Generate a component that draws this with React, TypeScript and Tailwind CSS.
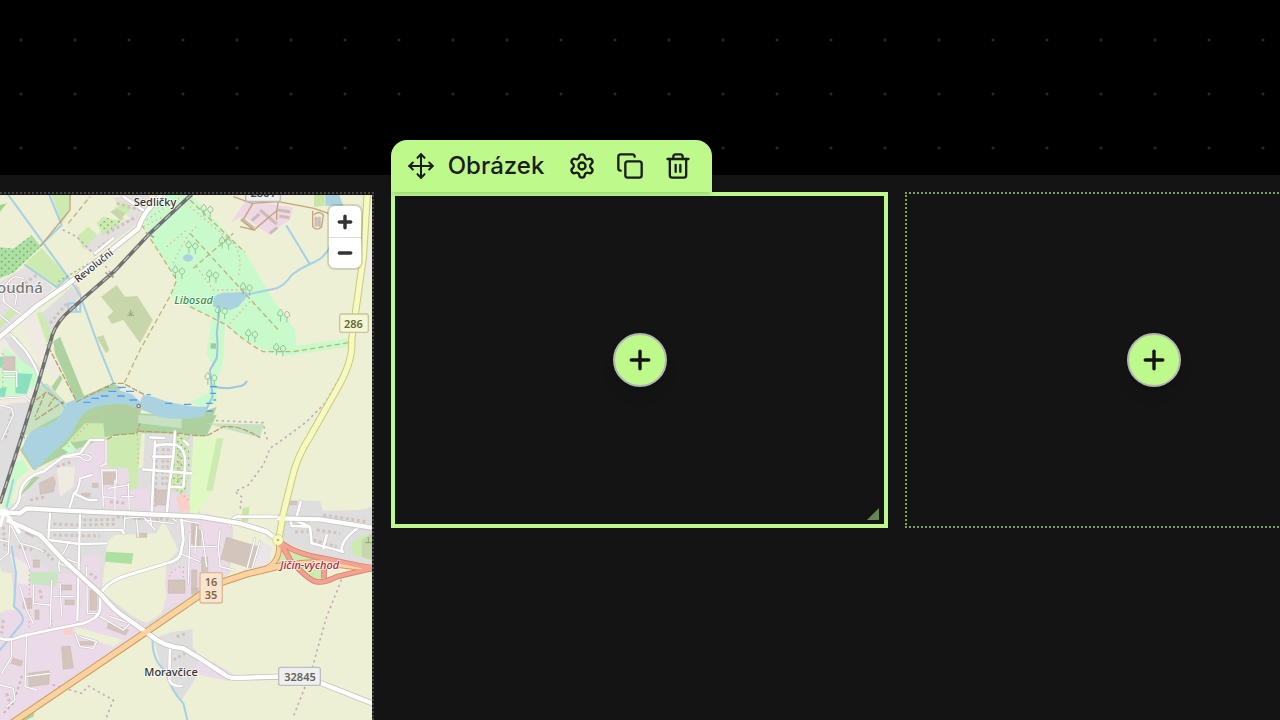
import type { ReactNode } from "react";
import { Copy, Move, Plus, Settings, Trash2 } from "lucide-react";

type Line = { d: string; w?: number };

const streets: Line[] = [
  // north-west village
  { d: "M0 945 L40 978 M30 1000 L75 1050 M10 885 L12 905 Q40 930 75 950 M10 905 Q5 850 45 830 L70 835 M20 865 L50 885 L45 915" },
  { d: "M285 760 L340 715 M370 590 L435 635", w: 9 },
  { d: "M38 1010 L75 1050 Q110 1100 120 1140", w: 8 },
  // west blocks
  { d: "M0 1215 L35 1225 L40 1245 L5 1320 M0 1195 L75 1190 L90 1205 M10 1115 L50 1115 L50 1160 M12 1130 L45 1130" },
  // large centre streets
  { d: "M25 1535 Q60 1520 60 1480 Q70 1430 130 1415 L190 1370 L240 1360 L270 1320 L310 1320", w: 9 },
  { d: "M195 1372 L240 1370 Q260 1390 275 1375 Q265 1360 245 1365" },
  { d: "M240 1435 L275 1425 M240 1435 Q235 1475 222 1480 L205 1535 M222 1480 L265 1500 L290 1500", w: 8 },
  { d: "M318 1320 L318 1395 M300 1400 L318 1390" },
  { d: "M525 1295 L520 1370 L510 1440 L500 1545 M465 1325 L455 1540 M465 1340 Q480 1330 530 1335 Q560 1350 555 1400 L550 1460 M460 1370 L518 1370 M430 1408 L575 1420 M510 1460 L548 1462 M450 1312 L492 1314 M552 1322 L565 1335", w: 9 },
  { d: "M305 1410 L310 1520 M345 1440 L345 1535 M385 1450 L388 1530 M325 1465 L385 1455 M310 1490 L350 1495 M365 1490 L400 1490 M308 1410 L350 1410 L350 1450" },
  { d: "M150 1540 L145 1615 M240 1540 L232 1860 M145 1590 L365 1590 L372 1600 M145 1620 L240 1632 L320 1630", w: 8 },
  { d: "M375 1545 L372 1590 M375 1555 L430 1550 L465 1590 M410 1560 L415 1610 M435 1560 L470 1565 L520 1570 M450 1545 L455 1580 M500 1545 L530 1565" },
  { d: "M30 1560 L25 1660 L0 1680 M0 1620 L25 1625 M30 1570 L60 1630 Q110 1640 130 1655 M65 1635 L90 1705" },
  { d: "M205 1625 Q200 1650 185 1665 Q170 1690 180 1715 M180 1690 L220 1710 M195 1675 L235 1690" },
  { d: "M545 1560 L550 1620 L542 1660 Q540 1680 500 1690 L385 1725 Q330 1740 305 1775", w: 10 },
  { d: "M302 1775 L300 1830 Q295 1855 250 1870 L150 1890 L60 1910 Q30 1925 0 1915", w: 9 },
  { d: "M100 1755 L100 1810 L150 1815 M60 1760 L80 1830 L100 1870 M180 1750 L185 1850 M160 1790 L225 1790 M155 1740 L150 1880 M260 1700 L262 1840 L290 1840" },
  { d: "M35 1915 L35 1970 L5 2020 M80 1900 L75 2060 L110 2070 M75 2030 L150 2020 M225 1900 L240 1940 L280 1945 L290 1925 L240 1910 M0 2055 L40 2065 L45 2100 L20 2120" },
  { d: "M300 1850 L370 1890 L390 1870 L330 1850 M540 1660 L600 1685 M570 1600 L565 1750 M540 1560 L600 1570" },
  { d: "M510 1935 L508 2040 Q515 2060 545 2058", w: 9 },
  // east residential
  { d: "M870 1555 L930 1580 L935 1630 L1030 1655 M980 1605 L970 1645 M1080 1580 Q1020 1620 1025 1655 M902 1505 L890 1550 M870 1550 L875 1578 L930 1580", w: 9 },
  { d: "M690 1575 Q700 1545 720 1550 L840 1550", w: 9 },
  { d: "M655 1640 L660 1700 L700 1710 M780 1625 L755 1710 M765 1615 L740 1710 M590 1580 L585 1660 M605 1590 L620 1700 M660 1590 L655 1640 M570 1640 L650 1640" },
];

const stream = "M25 585 L205 832 L240 885 L300 1050 L345 1160 M148 585 L185 675 L120 738 M75 795 L170 862 L205 830 M205 910 h36 v25 h-36z M214 920 v15 M228 920 v15";
const railway = "M575 583 L450 700 L345 812 L250 895 L195 945 Q160 980 150 1030 L110 1165 L65 1310 L0 1510";
const primary = "M20 2180 L400 1922 L600 1785 L670 1745 L740 1722 L830 1700 Q920 1685 990 1690 L1116 1705";
const mainStreet = "M-10 1535 L60 1540 L80 1525 L200 1532 L600 1550 L720 1570 L800 1595 Q820 1612 832 1618 M832 1555 L960 1558 L1116 1583";
const roadEast = "M1102 580 L1090 770 L1055 1020 Q1060 1080 1015 1160 L930 1310 Q890 1370 875 1440 L850 1540 L836 1620";
const roadNorth = "M-10 1018 L110 918 L200 855 L340 745 L415 685 Q425 655 440 635 L482 585";
const roadSouth = "M20 1560 L120 1605 L190 1680 L305 1785 Q340 1830 380 1855 L450 1905 Q490 1940 550 1945 L600 1975 L680 2028 Q690 2034 710 2034 L830 2030 L940 2040 L1116 2110";
const motorwayLink = "M835 1622 Q880 1660 970 1675 L1116 1705 M840 1635 Q860 1655 870 1680 Q930 1745 950 1745 Q970 1750 1010 1730 L1060 1718 L1116 1705 M972 1735 L972 1705";

const buildings =
  "M118 1450 l40 -20 l8 15 l-5 30 l-40 8z M310 1418 h35 v35 h-35z M278 1450 h16 v12 h-16z M10 1070 h35 v40 h-35z M465 1470 h40 v45 h-40z" +
  "M505 1740 h50 v40 h-50z M270 1770 h20 v60 h-20z M325 1870 l60 20 l-8 15 l-55 -20z M185 1940 l25 -2 l10 65 l-30 5z M85 2020 l62 -8 v40 l-60 8z M40 1975 l28 8 l-5 15 l-30 -8z M70 1795 h25 v30 h-25z M180 1755 h35 v15 h-35z M195 1800 h28 v14 h-28z" +
  "M680 1612 l95 28 l-20 65 l-92 -28z M580 1590 h22 v50 h-22z M605 1672 h18 v60 h-18z M575 1710 h15 v60 h-15z M575 1570 h20 v60 h-20z M370 1545 h20 v10 h-20z M410 1600 h30 v12 h-30z M160 1525 h20 v8 h-20z M245 1480 h25 v10 h-25z" +
  "M105 1830 h12 v28 h-12z M235 1925 h45 v10 h-45z M870 1504 h20 v10 h-20z M80 1590 l25 12 l-5 10 l-25 -12z M100 1680 h18 v22 h-18z M575 1765 h20 v18 h-20z";

const smallHouses = "M320 700 L410 650 M295 745 L330 720 M350 610 L420 630 M60 860 L110 825 M75 880 L110 860 M150 970 L205 905 M470 1345 L465 1520 M490 1345 L488 1455 M505 1345 L500 1455 M395 1555 L520 1558 M250 1575 L350 1572 M160 1572 L235 1575 M160 1605 L300 1608 M55 1640 L100 1650 M530 1910 L560 1900 M520 1980 L555 1960 M540 2030 L565 2010 M885 1595 L925 1595 M950 1590 L1020 1600 M940 1620 L1010 1640 M970 1545 L1100 1565 M170 1400 L215 1385 M90 1500 L140 1490 M350 1550 L480 1560 M35 1240 L15 1320 M250 1560 L350 1558 M330 1505 L380 1510 M540 1350 L535 1450 M130 1650 L160 1680 M10 1580 L15 1650 M120 1770 L125 1800 M10 1860 L5 1900 M20 2080 L30 2110 M270 1720 L290 1735";

function Area({ d, fill }: { d: string; fill: string }) {
  return <path d={d} fill={fill} />;
}

function Trees({ x, y }: { x: number; y: number }) {
  return (
    <path
      transform={`translate(${x} ${y}) scale(1.2)`}
      d="M-7 12 V-2 M-7 -2 q-9 0 -7 -8 l7 -9 l6 9 q2 8 -6 8 M9 14 V2 M9 2 q-8 -2 -6 -10 q6 -10 12 0 q3 8 -6 10"
      fill="none"
      stroke="#83b98c"
      strokeWidth="2"
    />
  );
}

function Label({ x, y, size = 33, fill = "#333", children, ...rest }: {
  x: number; y: number; size?: number; fill?: string; children: ReactNode; transform?: string; fontStyle?: string; fontWeight?: number; textAnchor?: "start" | "middle";
}) {
  return (
    <text x={x} y={y} fontSize={size} fontWeight={500} fill={fill} stroke="#fff" strokeOpacity=".7" strokeWidth="6" strokeLinejoin="round" paintOrder="stroke" textAnchor="middle" {...rest}>
      {children}
    </text>
  );
}

function Shield({ x, y, w, h, fill, stroke }: { x: number; y: number; w: number; h: number; fill: string; stroke: string }) {
  return <rect x={x} y={y} width={w} height={h} rx="6" fill={fill} stroke={stroke} strokeWidth="4" />;
}

function TownMap() {
  return (
    <svg viewBox="0 585 1116 1575" preserveAspectRatio="xMinYMin slice" className="block h-full w-full font-['Noto_Sans',sans-serif]" role="img" aria-label="Mapa">
      <defs>
        <pattern id="orchard" width="22" height="20" patternUnits="userSpaceOnUse">
          <circle cx="5" cy="5" r="2.4" fill="#579b55" />
          <circle cx="16" cy="15" r="2.4" fill="#579b55" />
        </pattern>
      </defs>
      <rect y="585" width="1116" height="1575" fill="#edf0d5" />

      {/* built-up areas */}
      <Area fill="#e2dfdc" d="M340 595 L375 585 H450 V630 L420 665 L290 762 L250 745 L290 705 L325 680 L390 655z" />
      <Area fill="#e6dfe2" d="M0 845 L85 795 L120 830 L160 865 L70 945 L0 1010z" />
      <Area fill="#dedede" d="M125 940 L215 860 L240 890 L190 940 Q160 970 145 1020z" />
      <Area fill="#f0ebe2" d="M60 970 L120 930 L145 1040 L190 1150 L180 1160 L110 1070z" />
      <Area fill="#f0ebe2" d="M0 1020 L30 1000 L130 1130 L60 1330 L0 1500z" />
      <Area fill="#dedede" d="M10 1010 L50 1010 L125 1110 L110 1140 L30 1040z M40 1210 L90 1205 L55 1340 L0 1480 V1220z" />
      <Area fill="#e1dedf" d="M60 1500 L110 1430 L200 1370 L260 1310 L320 1320 V1400 L440 1405 V1290 H600 V1550 L700 1580 L690 1720 L590 1790 L400 1925 L60 2160 H0 V1840 L40 1830 L0 1700 V1530z" />
      <Area fill="#ebdae8" d="M230 1390 L300 1310 L320 1320 V1405 L385 1405 L395 1470 L450 1465 L530 1480 V1530 L310 1520 L300 1450 L230 1440z" />
      <Area fill="#ebdae8" d="M60 1640 L180 1720 L240 1720 L300 1780 L430 1890 L40 2160 H0 V1880z M500 1710 L570 1700 L560 1560 L620 1540 L690 1575 L680 1720 L590 1780 L490 1830z M240 1580 L300 1660 V1770 L250 1720z" />
      <Area fill="#dedede" d="M90 1600 L145 1630 L240 1720 L170 1720 L95 1680z M140 1530 L310 1530 L320 1660 L240 1670 L145 1610z M350 1545 L440 1550 L430 1600 L370 1610z" />
      <Area fill="#dedede" d="M180 1485 L290 1475 L310 1530 L90 1525z M435 1300 L525 1295 L510 1465 L425 1465z" />
      <Area fill="#f0ebe2" d="M170 1400 L225 1400 L220 1460 L180 1490z M30 1660 L90 1700 L85 1755 L50 1750z" />
      <Area fill="#dedede" d="M460 1915 L520 1895 L578 1888 V1940 L600 1970 L590 2030 L545 2100 L510 2060 L480 1990z" />
      <Area fill="#ebdae8" d="M580 1990 L640 1985 L720 2035 L680 2042 L600 2025z" />
      <Area fill="#dedede" d="M850 1500 L960 1503 L970 1532 L1080 1530 L1116 1520 V1700 L960 1670 L840 1620z" />
      <Area fill="#ebe5e9" d="M780 1620 L815 1640 L808 1700 L755 1710z" />
      <Area fill="#eed8e6" d="M692 668 L738 600 L880 622 L870 660 L845 675 L810 706 L730 648z" />

      {/* fields, meadows and woods */}
      <Area fill="#cdebb0" d="M85 780 L125 745 L205 830 L170 860 L75 795z M155 585 H213 L205 640 L185 672z M230 710 L265 680 L292 705 L250 745z M290 670 L310 650 L345 660 L375 655 L310 705z M345 625 L375 605 L395 625 L365 655z" />
      <Area fill="#c8d7ab" d="M330 635 L350 625 L375 640 L362 660z M303 890 L350 855 L375 890 L412 888 L458 960 L420 1030 L370 960 L335 972 L322 950 L340 935z M290 1012 L310 1005 L328 1050 L318 1060z" />
      <Area fill="#aedfa3" d="M0 742 L40 746 L95 706 L122 740 L40 818 L0 835z" />
      <path d="M0 742 L40 746 L95 706 L122 740 L40 818 L0 835z" fill="url(#orchard)" />
      <path d="M290 670 L310 650 L345 660 L375 655 L310 705z" fill="url(#orchard)" />
      <Area fill="#9bd58f" d="M0 615 L20 610 L0 635z" />
      <Area fill="#aed1a0" d="M160 1025 L180 1010 L255 1195 L230 1205 L165 1060z M155 1160 L180 1125 L188 1135 L165 1175z" />
      <Area fill="#cdebb0" d="M110 940 L125 935 L165 1020 L140 1030z M0 960 L30 925 L50 940 L0 985z" />
      <Area fill="#c8facc" d="M440 640 L500 585 H575 L735 757 L820 900 L885 990 L888 1037 L1045 1015 V1040 L870 1066 L810 1060 L720 1010 L675 970 L570 920 L512 885 L530 840 L430 680z" />
      <Area fill="#c8facc" d="M635 960 L675 970 L670 1060 L665 1110 L650 1130 L650 1210 L600 1220 L570 1205 L625 1180 L640 1100 L620 1060z" />
      <Area fill="#c8e1c0" d="M110 1160 L140 1150 L200 1210 L190 1240 L110 1290 L70 1310 L90 1200z" />
      <Area fill="#aed1a0" d="M60 1350 L110 1285 L190 1240 L200 1210 L340 1150 L430 1210 L420 1240 L570 1250 L650 1220 L620 1300 L420 1300 L320 1310 L200 1360 L100 1410z" />
      <Area fill="#add19e" d="M315 1220 L415 1210 L412 1295 L315 1310z M545 1255 L650 1245 L620 1308 L545 1300z" />
      <Area fill="#c8e1c0" d="M415 1245 L545 1252 V1285 L415 1270z M620 1270 L790 1273 L780 1313 L690 1290z" />
      <Area fill="#cdebb0" d="M200 1330 L255 1270 L310 1270 L315 1320 L260 1320z M322 1315 L425 1295 L410 1468 L388 1468 L385 1405 L322 1400z M530 1300 L565 1310 L570 1410 L555 1480 L510 1470 L525 1370z" />
      <path d="M530 1300 L565 1310 L570 1410 L555 1480 L510 1470 L525 1370z" fill="url(#orchard)" />
      <Area fill="#e0f9c3" d="M580 1310 L670 1315 L640 1470 L580 1560 L568 1530z" />
      <Area fill="#cdebb0" d="M650 1315 H670 L638 1472 H618z" />
      <Area fill="#c8facc" d="M185 1345 L210 1325 L230 1350 L210 1360z M0 1120 L10 1040 L130 1130 L120 1150 L50 1190 L0 1185z M45 1385 L70 1380 L85 1410 L50 1440 L30 1520 L5 1530z" />
      <Area fill="#88e0be" d="M48 1120 L98 1122 L80 1182 L46 1180z M0 1165 L20 1160 L15 1190 L0 1190z M0 1070 L8 1070 V1100 L0 1105z" />
      <Area fill="#edf0d5" d="M322 1625 L345 1605 L470 1600 L490 1560 L535 1650 L500 1690 L495 1760 L500 1790 L485 1840 L440 1870 L400 1850 L305 1775z M225 1880 L370 1920 L340 1940 L225 1900z M0 1715 L35 1720 L45 1830 L0 1830z" />
      <Area fill="#aedfa3" d="M318 1655 L400 1660 L395 1692 L315 1685z" />
      <Area fill="#c8e6c0" d="M92 1715 L175 1715 L170 1760 L88 1750z" />
      <Area fill="#cdebb0" d="M840 1640 L870 1650 L990 1690 L975 1740 L950 1745 L875 1680 L835 1690z M1055 1630 L1080 1610 L1116 1600 V1680 L1060 1665z" />
      <Area fill="#c8d7ab" d="M1085 1620 L1116 1600 V1680 L1085 1670z" />
      <Area fill="#aed1a0" d="M70 2150 L105 2130 L100 2150 L70 2165z M70 1470 L100 1430 L120 1430 L60 1490z" />
      <Area fill="#f9cfc8" d="M145 1435 L165 1425 L170 1455z M190 1890 L215 1880 L218 1905 L190 1905z M225 850 L240 865 L245 890 L230 880z M530 1490 L560 1480 L570 1530 L540 1535z" />
      <Area fill="#aad3df" d="M976 585 h42 l12 32 h-54z" />
      <Area fill="#c8e6a8" d="M942 585 h32 v32 l-32 4z M728 1525 l20 -5 l-4 45 l-20 0z M885 1565 h40 l10 10 h-45z" />
      <Area fill="#f0ebe2" d="M1080 770 L1116 755 V835 H1080z M355 1170 L380 1160 L430 1190 L440 1210 L415 1215z" />

      {/* water */}
      <Area fill="#aad3df" d="M68 1350 Q75 1300 110 1285 Q170 1275 190 1230 L200 1210 Q270 1180 345 1168 L395 1182 L420 1205 L430 1185 L460 1190 Q520 1215 600 1220 L625 1220 L610 1250 Q540 1262 480 1252 L415 1225 L370 1212 Q280 1210 245 1245 L205 1315 Q140 1375 105 1412z M637 900 Q650 875 690 878 L740 875 L745 885 L715 920 L690 930 L640 920z" />
      <ellipse cx="564" cy="774" rx="15" ry="11" fill="#aad3df" />
      <g fill="none" stroke="#a5d0e5" strokeWidth="6" strokeLinecap="round">
        <path d={stream} />
        <path d="M735 885 L830 865 Q855 855 875 825 Q900 805 930 792 Q975 775 990 740 M860 678 L928 790" />
        <path d="M658 925 Q655 965 650 1000 Q655 1030 650 1075 L630 1110 L638 1190 L620 1225 M635 1158 Q680 1170 710 1160 Q730 1160 740 1145" stroke="#9dc6dc" />
        <path d="M35 1640 L48 1720 L42 1820 Q80 1850 65 1870 L0 1950 M458 1910 Q455 1960 475 1990 L508 2030 Q510 2070 550 2110 L562 2160 M120 1145 L190 1215 L200 1235 M40 1440 L20 1520" />
      </g>
      <path d="M250 1207 h22 M275 1195 h22 M303 1188 h22 M352 1188 h22 M325 1174 h24 M378 1174 h24 M353 1162 h24 M388 1200 h24 M315 1161 h12 M440 1184 h12 M495 1210 h22 M552 1213 h22 M630 1160 h20 M618 1210 h20 M630 1180 h18 M620 1233 h18 M640 1200 h8" stroke="#4f9ff0" strokeWidth="4" />

      {/* buildings */}
      <path d={smallHouses} stroke="#d1c3ba" strokeWidth="9" strokeDasharray="9 8" fill="none" />
      <g fill="none" stroke="#cdbcb6" strokeWidth="9">
        <path d="M755 662 L778 642 M780 630 L830 672 M832 630 L870 635 M838 648 L868 653 M725 655 L762 685 M810 700 L832 682 M948 650 v30 M958 650 v30" />
      </g>
      <path d={buildings} fill="#d3c5bc" stroke="#c3b2a9" strokeWidth="1.5" />

      {/* paths and field tracks */}
      <g fill="none" strokeWidth="4">
        <path d="M425 675 L530 840 L512 885 L420 1050 L370 1155 M580 805 L700 700 M570 700 L835 990 M570 920 L680 975 Q740 1030 790 1055 L880 1055 L1045 1028 M205 670 L270 590 M570 600 L735 757" stroke="#c0b478" strokeDasharray="16 9" />
        <path d="M210 585 V630 L120 740 M720 680 L762 690 L830 632 L835 605 L755 610 L700 590 M835 605 L942 625 L985 640 M938 632 V680 Q950 695 965 680 L970 645 Q955 630 942 645 M760 608 l-30 50 M765 692 L722 660 M830 630 v30" stroke="#c5a27c" />
        <path d="M145 1040 L230 1205 L340 1150 L370 1150 L435 1185 M105 1260 L190 1205 M90 1215 L140 1175 L175 1200 M135 1180 L105 1250 M145 1220 L165 1190 M320 1318 L345 1305 L410 1300 L420 1270 M415 1293 L540 1300 L570 1305 L620 1308 L670 1280 Q720 1275 780 1313" stroke="#b7a16b" strokeDasharray="18 5" />
        <path d="M190 690 L230 710 L310 790 L340 830 M1050 1060 L1040 1095 L975 1210 L920 1265 L860 1310 L810 1345 L790 1395 L745 1455 L705 1475 L725 1490 L720 1530 M650 1262 L790 1268 L795 1300 L805 1325 M1030 1725 L980 1850 L960 1920 L935 2010 L880 2150 M160 2055 L245 2080 L265 2058 L340 2100 L320 2150 M65 2030 L40 2110 L10 2140" stroke="#c4a9b6" strokeWidth="5" strokeDasharray="3 14" strokeLinecap="round" />
        <path d="M440 660 Q500 620 545 590 M430 680 Q460 665 490 650 M500 740 L560 690 M520 790 Q560 700 590 680 M570 620 L700 730 Q730 770 715 830 M590 800 L640 870 L740 870 M690 970 L750 905 M205 1340 Q270 1250 330 1230 L410 1230 L415 1400 M8 1060 L8 1170 M540 1700 L510 1720 L505 1770 M550 1700 V1740 M530 1470 L565 1500 M88 1710 V1890 M155 1860 V1890" stroke="#f0a796" strokeDasharray="4 10" />
        <path d="M175 845 L310 765 L410 690" stroke="#91bd71" strokeDasharray="7 7" />
      </g>
      <rect x="632" y="1030" width="16" height="16" fill="#a3c7a4" />
      {[[575, 745], [620, 635], [675, 732], [637, 832], [738, 870], [663, 940], [850, 950], [754, 1010], [838, 1052], [535, 820], [632, 1140]].map(([x, y]) => (
        <Trees key={`${x}-${y}`} x={x} y={y} />
      ))}

      {/* streets */}
      {["#c6c0bf", "#ffffff"].map((color, layer) => (
        <g key={color} fill="none" stroke={color} strokeLinecap="round" strokeLinejoin="round">
          {streets.map(({ d, w = 5 }) => (
            <path key={d} d={d} strokeWidth={layer ? w - 1 : w + 2} />
          ))}
        </g>
      ))}

      {/* railway */}
      <path d={railway} fill="none" stroke="#707070" strokeWidth="11" />
      <path d={railway} fill="none" stroke="#bdbdbd" strokeWidth="4" strokeDasharray="22 22" />
      <path d="M438 698 l24 14 M316 818 l24 14 M60 1300 l14 14 M140 1036 l18 -8" stroke="#999" strokeWidth="4" />

      {/* major roads */}
      <g fill="none" strokeLinejoin="round">
        <g stroke="#c9c4be" strokeWidth="18">
          <path d={roadNorth} />
          <path d={mainStreet} />
          <path d={roadSouth} />
        </g>
        <path d={motorwayLink} stroke="#da8070" strokeWidth="17" />
        <path d={primary} stroke="#cd9a5b" strokeWidth="22" />
        <path d="M835 1625 Q845 1680 800 1705" stroke="#cd9a5b" strokeWidth="17" />
        <path d={roadEast} stroke="#c8ca80" strokeWidth="22" />
        <g stroke="#fff" strokeWidth="13">
          <path d={roadNorth} />
          <path d={mainStreet} />
          <path d={roadSouth} />
        </g>
        <path d={primary} stroke="#fbd2a0" strokeWidth="16" />
        <path d="M835 1625 Q845 1680 800 1705" stroke="#fbd2a0" strokeWidth="12" />
        <path d={motorwayLink} stroke="#f3a190" strokeWidth="12" />
        <path d={roadEast} stroke="#f6fabf" strokeWidth="16" />
      </g>
      <path d="M0 1535 Q12 1525 25 1537 Q12 1550 0 1540 M10 1545 L0 1580 M22 1545 L60 1600" fill="none" stroke="#fff" strokeWidth="10" />
      <circle cx="834" cy="1620" r="16" fill="#f6fabf" stroke="#c9c978" strokeWidth="2" />
      <circle cx="834" cy="1620" r="4" fill="#bdbb78" />
      <circle cx="416" cy="1218" r="5" fill="#eee" stroke="#977" strokeWidth="4" />
      <circle cx="187" cy="1209" r="4" fill="#a9847d" />
      <path d="M392 930 v16 m-10 0 h20 m-16 -9 l6 8 l6 -8 M1105 1612 v16 m-10 0 h20" stroke="#8fa878" strokeWidth="3" fill="none" />

      {/* labels */}
      <Label x={465} y={617}>Sedličky</Label>
      <Label x={280} y={808} size={30} transform="rotate(-39 280 796)">Revoluční</Label>
      <Label x={-9} y={878} size={45} fill="#777" textAnchor="start">oudná</Label>
      <Label x={581} y={912} size={33} fill="#3b9145" fontStyle="italic">Libosad</Label>
      <Label x={513} y={2028} size={33}>Moravčice</Label>
      <Label x={929} y={1708} size={33} fill="#b22a42" fontStyle="italic">Jičín-východ</Label>

      <Shield x={737} y={560} w={104} h={44} fill="#efefef" stroke="#bebebe" />
      <Shield x={1019} y={942} w={86} h={55} fill="#f4f6d6" stroke="#c6c69a" />
      <Shield x={600} y={1718} w={67} h={91} fill="#f8e4d0" stroke="#dbb990" />
      <Shield x={836} y={2002} w={125} h={54} fill="#efefef" stroke="#bebebe" />
      <g fontSize="33" textAnchor="middle" fontWeight="600">
        <text x="789" y="592" fill="#555">2861</text>
        <text x="1060" y="983" fill="#66662f">286</text>
        <text x="633" y="1758" fill="#84653a">16</text>
        <text x="633" y="1797" fill="#84653a">35</text>
        <text x="900" y="2042" fill="#606060">32845</text>
      </g>
    </svg>
  );
}

function AddButton() {
  return (
    <button type="button" aria-label="Přidat obrázek" className="flex size-[54px] items-center justify-center rounded-full border-2 border-[#b4b4b4] bg-[#bdf98b] text-[#141414] shadow-lg">
      <Plus size={30} strokeWidth={2.7} />
    </button>
  );
}

function BlockToolbar() {
  return (
    <div className="absolute -top-14 -left-1 flex h-[52px] items-center rounded-t-2xl bg-[#bdf98b] px-4 text-[#1c1c1c] shadow-md">
      <button type="button" aria-label="Přesunout" className="cursor-move">
        <Move size={28} strokeWidth={1.75} />
      </button>
      <span className="ml-[13px] text-2xl font-medium">Obrázek</span>
      <div className="ml-6 flex gap-5 pr-1">
        <button type="button" aria-label="Nastavení"><Settings size={28} strokeWidth={2} /></button>
        <button type="button" aria-label="Duplikovat"><Copy size={28} strokeWidth={2} /></button>
        <button type="button" aria-label="Smazat"><Trash2 size={28} strokeWidth={2} /></button>
      </div>
    </div>
  );
}

export default function App() {
  return (
    <div className="flex h-screen flex-col overflow-hidden bg-black font-['Inter',sans-serif]">
      <div className="h-[175px] shrink-0 bg-[radial-gradient(circle,#262626_1px,transparent_2px)] bg-[length:54px_54px] bg-[position:-6px_13px]" />
      <main className="min-h-0 flex-1 bg-[#141414] pt-[17px]">
        <div className="grid h-full w-[calc(100%+123px)] grid-cols-[374fr_498fr_498fr] items-start gap-x-[17px]">
          <section aria-label="Mapa" className="relative h-full border-t-2 border-r-2 border-dotted border-[#454545] pt-px">
            <TownMap />
            <div className="absolute top-3 right-[11px] flex w-8 flex-col overflow-hidden rounded-md bg-white shadow-[0_0_0_2px_rgba(0,0,0,0.12)]">
              <button type="button" aria-label="Přiblížit" className="flex h-8 items-center justify-center border-b border-[#ddd]">
                <svg viewBox="0 0 14 14" className="size-4"><path d="M7 2v10M2 7h10" stroke="#333" strokeWidth="3" strokeLinecap="round" /></svg>
              </button>
              <button type="button" aria-label="Oddálit" className="flex h-[30px] items-center justify-center">
                <svg viewBox="0 0 14 14" className="size-4"><path d="M2 7h10" stroke="#333" strokeWidth="3" strokeLinecap="round" /></svg>
              </button>
            </div>
          </section>
          <section aria-label="Obrázek" className="relative flex h-[336px] items-center justify-center border-4 border-[#bdf98b]">
            <BlockToolbar />
            <AddButton />
            <svg viewBox="0 0 12 12" className="absolute right-[5px] bottom-1 size-3" aria-hidden="true">
              <path d="M12 0V12H0z" fill="#678550" />
            </svg>
          </section>
          <section aria-label="Obrázek" className="flex h-[336px] items-center justify-center border-2 border-dotted border-[#7ba35c]">
            <AddButton />
          </section>
        </div>
      </main>
    </div>
  );
}
